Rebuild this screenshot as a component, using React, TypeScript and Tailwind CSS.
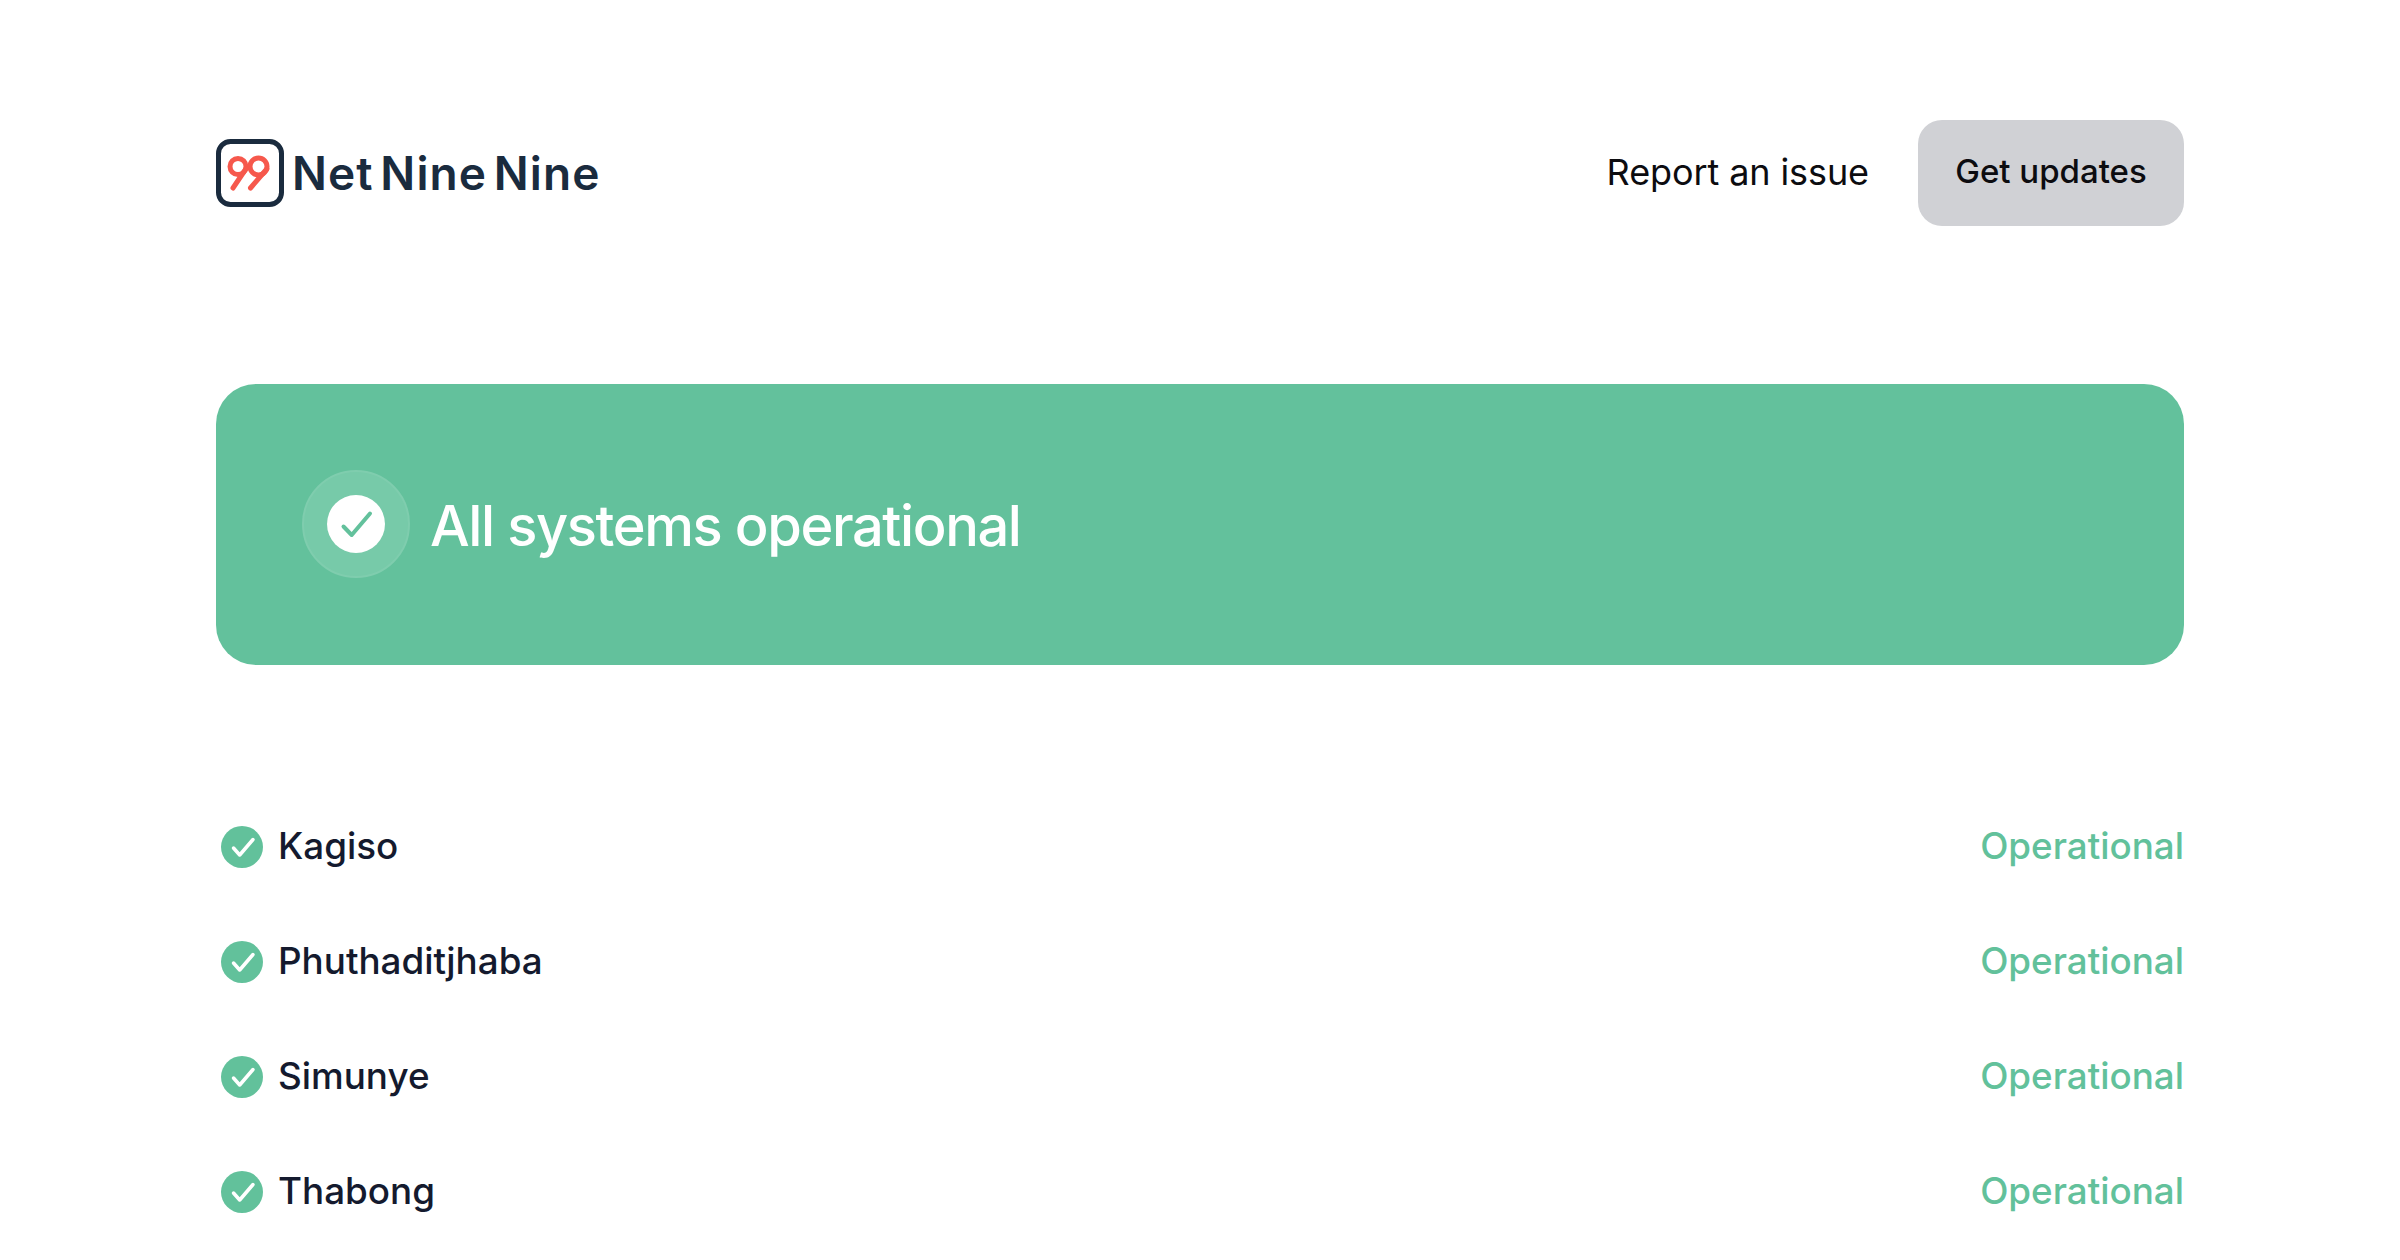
const rows = ["Kagiso", "Phuthaditjhaba", "Simunye", "Thabong"];

function Logo() {
  return (
    <div className="flex items-center gap-[8px]">
      <svg width="68" height="68" viewBox="0 0 68 68" fill="none">
        <rect x="2.5" y="2.5" width="63" height="63" rx="12" stroke="#1a2b3e" strokeWidth="5" />
        <circle cx="22" cy="27.5" r="8" stroke="#f6584c" strokeWidth="5" />
        <circle cx="42.5" cy="27.5" r="8.5" stroke="#f6584c" strokeWidth="5" />
        <path d="M29.8 30 L17 49" stroke="#f6584c" strokeWidth="5" strokeLinecap="round" />
        <path d="M50.8 30 L34.5 49" stroke="#f6584c" strokeWidth="5" strokeLinecap="round" />
      </svg>
      <span className="text-[46px] leading-none font-semibold tracking-[1.1px] [word-spacing:-6px] text-[#1a2b3e]">
        Net Nine Nine
      </span>
    </div>
  );
}

function RowCheck() {
  return (
    <svg width="42" height="42" viewBox="0 0 42 42" fill="none" className="mx-[5px]">
      <circle cx="21" cy="21" r="21" fill="#62c19b" />
      <path d="M12.5 22 L18.7 29 L32 13.5" stroke="white" strokeWidth="3.5" strokeLinecap="round" strokeLinejoin="round" />
    </svg>
  );
}

export default function App() {
  return (
    <div className="min-h-screen bg-white px-[216px] pt-[120px] font-['Inter',sans-serif]">
      <header className="flex h-[105px] items-center justify-between">
        <Logo />
        <div className="flex items-center gap-[49px]">
          <span className="pb-[2px] text-[36px] tracking-[-0.1px] text-[#0c0c10]">Report an issue</span>
          <button className="flex h-[106px] w-[266px] items-center justify-center rounded-[24px] bg-[#d0d1d5] pb-[2px] text-[33px] font-medium text-[#0c0c10]">
            Get updates
          </button>
        </div>
      </header>

      <section className="mt-[159px] flex h-[281px] items-center rounded-[40px] bg-[#63c19c] pl-[86px]">
        <div className="mb-[2px] flex h-[108px] w-[108px] items-center justify-center rounded-full border-2 border-[#7fcdae] bg-[#77caa9]">
          <svg width="58" height="58" viewBox="0 0 58 58" fill="none">
            <circle cx="29" cy="29" r="29" fill="white" />
            <path d="M16.5 31.5 L24.7 40 L43 18.5" stroke="#63c19c" strokeWidth="4" strokeLinecap="round" strokeLinejoin="round" />
          </svg>
        </div>
        <h1 className="ml-[20px] pt-[2px] text-[56px] font-medium leading-none tracking-[-1.4px] text-white">All systems operational</h1>
      </section>

      <ul className="mt-[124px]">
        {rows.map((name) => (
          <li key={name} className="flex h-[115px] items-center justify-between text-[36.8px] font-medium">
            <div className="flex items-center gap-[10px] text-[#141a2e]">
              <RowCheck />
              <span className="pb-[1px]">{name}</span>
            </div>
            <span className="pb-[1px] text-[#62c19b]">Operational</span>
          </li>
        ))}
      </ul>
    </div>
  );
}
